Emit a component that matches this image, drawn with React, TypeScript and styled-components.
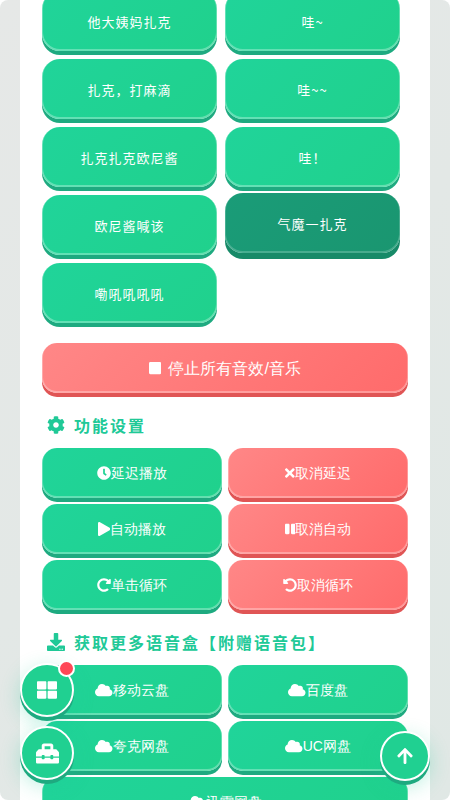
import { createGlobalStyle, styled } from "styled-components"
import { ReactNode } from "react"
import { FaCog, FaClock, FaTimes, FaPlay, FaPause, FaRedoAlt, FaUndoAlt, FaDownload, FaCloud, FaStop, FaToolbox, FaArrowUp, FaThLarge } from "react-icons/fa"

const GlobalStyle = createGlobalStyle`
  html, body {
    margin: 0;
    height: 100%;
    overflow: hidden;
    background: #fff;
  }
  body {
    font-family: "Liberation Sans", "Noto Sans CJK SC", sans-serif;
  }
`

const Page = styled.div`
  height: 800px;
  padding: 0 20px;
  box-sizing: border-box;
  overflow: hidden;
  border-radius: 8px;
  background: linear-gradient(135deg, #e6e8e7, #e0e8e5);
`

const Panel = styled.main`
  height: 800px;
  background: #fff;
  padding: 0 22px;
  overflow: hidden;
`

const SoundGrid = styled.div`
  display: grid;
  grid-template-columns: 175px 175px;
  gap: 8px;
  margin-top: -9px;
`

const Pressable = styled.button<{ $red?: boolean }>`
  display: flex;
  align-items: center;
  justify-content: center;
  padding: 0;
  color: #fff;
  cursor: pointer;
  border: 0;
  background: ${p => p.$red
    ? "linear-gradient(135deg, #ff8787, #ff6b6b)"
    : "linear-gradient(135deg, #20d49a, #20d18c)"};
  box-shadow:
    inset 0 -1px 0 1px rgba(255,255,255,.3),
    0 4px 0 ${p => p.$red ? "#e05555" : "#1eaa80"};
  svg { flex: none; }
`

const SoundButton = styled(Pressable)<{ $active?: boolean }>`
  height: 60px;
  border-radius: 18px;
  font-family: "Noto Sans CJK SC", sans-serif;
  font-size: 13px;
  letter-spacing: 1px;
  ${p => p.$active && `
    transform: translateY(-2px);
    background: linear-gradient(135deg, #1a9c78, #1a9670);
    box-shadow: inset 0 -1px 0 1px rgba(255,255,255,.2), 0 6px 0 #178a68;
  `}
`

const StopButton = styled(Pressable)`
  width: 100%;
  height: 50px;
  margin-top: 20px;
  padding-top: 2px;
  gap: 7px;
  border-radius: 15px;
  font-size: 16px;
  svg { font-size: 14px; width: .875em; margin-top: -2px; }
`

const Heading = styled.h3`
  display: flex;
  align-items: center;
  gap: 9px;
  margin: 0;
  padding-left: 5px;
  height: 22px;
  color: #20c997;
  font-family: "Noto Sans CJK SC", sans-serif;
  font-size: 16px;
  font-weight: 700;
  letter-spacing: 2px;
  svg { font-size: 18px; }
`

const FunctionSection = styled.section`
  margin-top: 21px;
`

const ActionGrid = styled.div`
  display: grid;
  grid-template-columns: 1fr 1fr;
  gap: 6px;
  margin-top: 12px;
`

const ActionButton = styled(Pressable)<{ $wide?: boolean }>`
  height: 50px;
  padding-top: 2px;
  border-radius: 15px;
  font-size: 14px;
  font-weight: 500;
  ${p => p.$wide && "grid-column: 1 / -1;"}
  svg { margin-top: -2px; }
`

const CloudIcon = styled(FaCloud)`
  width: 1.25em;
`

const CloseIcon = styled(FaTimes)`
  width: .6875em;
`

const PlayIcon = styled(FaPlay)`
  width: .875em;
`

const PauseIcon = styled(FaPause)`
  width: .75em;
`

const DownloadSection = styled.section`
  margin-top: 21px;
`

const Float = styled.button`
  position: fixed;
  width: 50px;
  height: 50px;
  border-radius: 50%;
  display: flex;
  align-items: center;
  justify-content: center;
  padding: 0;
  color: #fff;
  border: 2px solid #fff;
  box-sizing: content-box;
  background: #20d091;
  box-shadow: 0 4px 0 #1eaa80, 0 6px 20px rgba(32,201,151,.3);
`

const MenuFloat = styled(Float)`
  left: 20px;
  top: 663px;
  font-size: 20px;
`

const ToolFloat = styled(Float)`
  left: 20px;
  top: 726px;
  font-size: 23px;
`

const TopFloat = styled(Float)`
  left: 380px;
  top: 731px;
  width: 46px;
  height: 46px;
  font-size: 18px;
`

const Badge = styled.span`
  position: absolute;
  top: -5px;
  right: -3px;
  width: 13px;
  height: 13px;
  border: 2px solid #fff;
  border-radius: 50%;
  background: #ff4757;
`

function Action({ red, icon, label, wide }: { red?: boolean; icon: ReactNode; label: string; wide?: boolean }) {
  return <ActionButton $red={red} $wide={wide}>{icon}{label}</ActionButton>
}

const sounds = ["他大姨妈扎克", "哇~", "扎克，打麻滴", "哇~~", "扎克扎克欧尼酱", "哇！", "欧尼酱喊该", "气魔一扎克", "嘞吼吼吼吼"]
const clouds = ["移动云盘", "百度盘", "夸克网盘", "UC网盘"]

export default function App() {
  return (
    <Page>
      <GlobalStyle />
      <Panel>
        <SoundGrid>
          {sounds.map(s => <SoundButton key={s} $active={s === "气魔一扎克"}>{s}</SoundButton>)}
        </SoundGrid>
        <StopButton $red><FaStop />停止所有音效/音乐</StopButton>
        <FunctionSection>
          <Heading><FaCog />功能设置</Heading>
          <ActionGrid>
            <Action icon={<FaClock />} label="延迟播放" />
            <Action red icon={<CloseIcon />} label="取消延迟" />
            <Action icon={<PlayIcon />} label="自动播放" />
            <Action red icon={<PauseIcon />} label="取消自动" />
            <Action icon={<FaRedoAlt />} label="单击循环" />
            <Action red icon={<FaUndoAlt />} label="取消循环" />
          </ActionGrid>
        </FunctionSection>
        <DownloadSection>
          <Heading><FaDownload />获取更多语音盒【附赠语音包】</Heading>
          <ActionGrid>
            {clouds.map(c => <Action key={c} icon={<CloudIcon />} label={c} />)}
            <Action wide icon={<CloudIcon />} label="迅雷网盘" />
          </ActionGrid>
        </DownloadSection>
      </Panel>
      <MenuFloat><FaThLarge /><Badge /></MenuFloat>
      <ToolFloat><FaToolbox /></ToolFloat>
      <TopFloat><FaArrowUp /></TopFloat>
    </Page>
  )
}
